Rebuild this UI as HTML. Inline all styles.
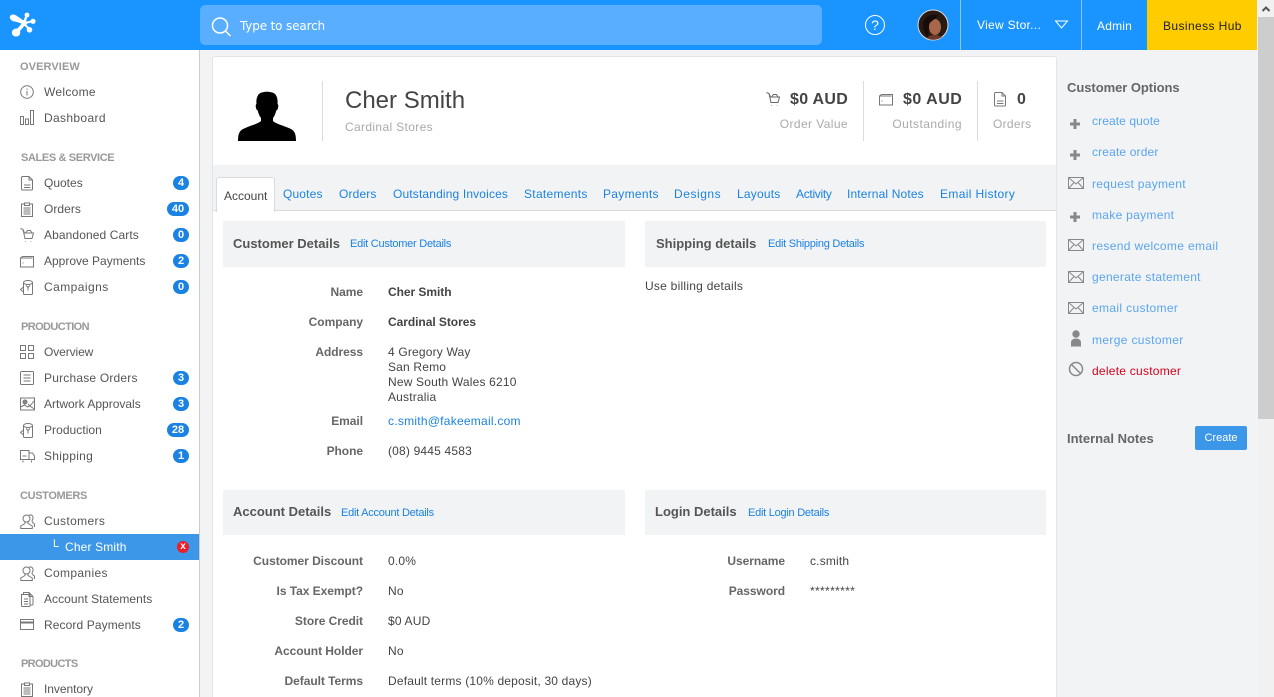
<!DOCTYPE html>
<html><head><meta charset="utf-8"><style>
html,body{margin:0;padding:0;width:1274px;height:697px;overflow:hidden;background:#f2f3f5;font-family:"Liberation Sans",Arial,sans-serif;font-size:12px;color:#444}
*{box-sizing:border-box}
#p{position:absolute;left:0;top:0;width:1274px;height:697px;overflow:hidden;background:#f2f3f5}
.a,.t,.n,.h,.b,.l,.v,.bv,.lk,.o,svg.i{position:absolute}
.t,.n,.h,.l,.v,.bv,.lk,.o{white-space:nowrap;line-height:16px;height:16px}
.n{left:44px;color:#555;letter-spacing:.15px}
.h{left:20px;font-size:11px;font-weight:bold;color:#999}
.b{height:14px;border-radius:7px;background:#1a82e2;color:#fff;font-size:11px;font-weight:bold;line-height:14px;text-align:center;right:1085px}
.b1{width:16px}.b2{width:22px}
.l{left:223px;width:140px;text-align:right;font-weight:bold;color:#666;letter-spacing:-.05px}
.v{left:388px;color:#444;letter-spacing:.18px}
.bv{left:388px;color:#444;font-weight:bold;letter-spacing:-.05px}
.lk{color:#1a82e2;letter-spacing:.25px}
.o{left:1092px;color:#5aa5f0;letter-spacing:.3px}
svg.i{fill:none;stroke:#777;stroke-width:1}
.sec{position:absolute;background:#f2f3f5}
.st{font-size:13px;font-weight:bold;color:#555}
.tab{color:#1a82e2;top:186px;letter-spacing:.15px}
.lk.sm{font-size:11px;letter-spacing:-.25px}
</style></head><body><div id="p">
<svg width="0" height="0" style="position:absolute"><defs>
<symbol id="doc" viewBox="0 0 14 15"><path d="M1.500 1.500a1 1 0 0 1 1-1H9l3.500 3.500v9a1 1 0 0 1-1 1h-9a1 1 0 0 1-1-1zM9 .5V4h3.500M4 9h6.500M4 11.500h6.500"/></symbol>
<symbol id="clip" viewBox="0 0 14 15"><path d="M4.500 2H1.500v12.500h11V2h-3M4.500 1h5v2.500h-5zM3.500 6h7M3.500 8h7M3.500 10h7M3.500 12h7"/></symbol>
<symbol id="cart" viewBox="0 0 15 15"><path d="M.5.500 3 1.500l1.500 3.500h9L12 10.500H5L3 1.500M5.500 5 7.500 2.500h3L12 5M5.500 13v.5M11 13v.5"/></symbol>
<symbol id="fold" viewBox="0 0 14 13"><path d="M.5 3v9h13V1.500H2.500zM.5 3l12 0M2.500 8h1"/></symbol>
<symbol id="can" viewBox="0 0 14 15"><ellipse cx="8" cy="2.500" rx="4.500" ry="2"/><path d="M3.500 2.500v11a1 1 0 0 0 1 1h7a1 1 0 0 0 1-1v-11M6 5.500l2 2 2-2M8 7.500v3M3.500 7 .5 9.500l3 2.500"/></symbol>
<symbol id="ppl" viewBox="0 0 15 15"><circle cx="6.500" cy="4.500" r="3.500"/><path d="M5 8v1.500L.8 12v2.500h11.500V12L8 9.500V8M9 1.300c2-1 4.500.2 4 3.200l-1 2.500 .5 1.500 2 1.500v3"/></symbol>
<symbol id="env" viewBox="0 0 16 12"><path d="M.5.500h15v11H.5zM.5.500 8 7l7.500-6.500M.5 11.500 6 5.500M15.500 11.500 10 5.500"/></symbol>
<symbol id="plus" viewBox="0 0 12 12"><path fill="#888" stroke="none" d="M4.500 1h3v3.500H11v3H7.500V11h-3V7.500H1v-3h3.500z"/></symbol>
</defs></svg>

<!-- header -->
<div class="a" style="left:0;top:0;width:1257px;height:50px;background:#1a94ff"></div>
<svg class="a" style="left:8px;top:10px" width="30" height="30" viewBox="0 0 30 30"><g fill="#fff"><path d="M2 6c2-2.500 5-1.500 7 0l8 5.500-1.500 2.500L7 11.500C4 11.500 1 9 2 6z"/><path d="M15 12 18 4h2l-2.500 9zM16 12l8-1.500.5 1.500-8 2.500zM15 14l1.500-1.500 5.500 6-1.500 1.500z"/><path d="M15 12l3 2-6 7c1 3-1 6-4.500 5.500C4 26 3 23 4.500 20.500 6 18.500 8 18.500 9.500 18.500z"/><circle cx="16" cy="13" r="3"/><circle cx="19" cy="5" r="2.400"/><circle cx="25" cy="11.300" r="2.600"/><circle cx="21.500" cy="19.800" r="2.800"/></g></svg>
<div class="a" style="left:200px;top:5px;width:622px;height:40px;background:#5aaeff;border-radius:5px"></div>
<svg class="a" style="left:210px;top:16px" width="22" height="22" viewBox="0 0 22 22" fill="none" stroke="#fff" stroke-width="1.500"><circle cx="10" cy="9.500" r="7.500"/><path d="m15.500 15 5 5"/></svg>
<div class="t" style="left:240px;top:18px;color:#fff;font-family:'DejaVu Sans',sans-serif;font-size:12px;letter-spacing:-.15px">Type to search</div>
<svg class="a" style="left:864px;top:14px" width="22" height="22" viewBox="0 0 22 22" fill="none" stroke="#fff"><circle cx="11" cy="11" r="9.500"/><text x="11" y="16" text-anchor="middle" fill="#fff" stroke="none" font-family="Liberation Sans" font-size="14">?</text></svg>
<svg class="a" style="left:917px;top:9px" width="32" height="32" viewBox="0 0 32 32"><circle cx="16" cy="16" r="15" fill="#2a1a14" stroke="#ddd" stroke-width="1"/><ellipse cx="18" cy="18" rx="6" ry="8" fill="#a8664a"/><path d="M6 14c2-7 8-9 15-8-2 4-7 6-9 9l-1 13c-3-3-6-9-5-14z" fill="#160c0a"/><path d="M10 29c4-4 10-4 15-1-4 3-11 4-15 1z" fill="#6b3a2c"/></svg>
<div class="a" style="left:960px;top:0;width:1px;height:50px;background:#8cc7fb"></div>
<div class="t" style="left:977px;top:17px;color:#fff;letter-spacing:.3px">View Stor...</div>
<svg class="a" style="left:1054px;top:20px" width="15" height="10" viewBox="0 0 15 10" fill="none" stroke="#fff"><path d="M1.500 1h12L7.500 8z"/></svg>
<div class="a" style="left:1081px;top:0;width:1px;height:50px;background:#8cc7fb"></div>
<div class="t" style="left:1097px;top:18px;color:#fff;letter-spacing:.2px">Admin</div>
<div class="a" style="left:1147px;top:0;width:110px;height:50px;background:#ffcc00"></div>
<div class="t" style="left:1163px;top:18px;color:#222;letter-spacing:.4px">Business Hub</div>

<!-- scrollbar -->
<div class="a" style="left:1258px;top:0;width:16px;height:697px;background:#f1f1f1"></div>
<div class="a" style="left:1258px;top:17px;width:16px;height:402px;background:#cdcdcd"></div>
<svg class="a" style="left:1258px;top:0" width="16" height="17" viewBox="0 0 16 17" fill="none" stroke="#555" stroke-width="2"><path d="m4.500 11 3.500-3.500 3.500 3.500"/></svg>

<!-- sidebar -->
<div class="a" style="left:0;top:50px;width:200px;height:647px;background:#fff;border-right:1px solid #ccc"></div>
<div class="h" style="top:59px;letter-spacing:.1px">OVERVIEW</div>
<svg class="i" style="left:20px;top:85px" width="14" height="14" viewBox="0 0 14 14"><circle cx="7" cy="7" r="6.300"/><path d="M7 6v4.500M7 3.500v1.300"/></svg><div class="n" style="top:84px;letter-spacing:.3px">Welcome</div>
<svg class="i" style="left:20px;top:110px" width="14" height="15" viewBox="0 0 14 15"><path d="M.5 6.500h3v8h-3zM5.500 9h3v5.500h-3zM10.500.5h3v14h-3z"/></svg><div class="n" style="top:110px;letter-spacing:.35px">Dashboard</div>
<div class="h" style="top:150px;left:21px;letter-spacing:-.37px">SALES &amp; SERVICE</div>
<svg class="i" style="left:20px;top:176px" width="14" height="15"><use href="#doc"/></svg><div class="n" style="top:175px;letter-spacing:0">Quotes</div><div class="b b1" style="top:176px">4</div>
<svg class="i" style="left:20px;top:202px" width="14" height="15"><use href="#clip"/></svg><div class="n" style="top:201px;letter-spacing:.05px">Orders</div><div class="b b2" style="top:202px">40</div>
<svg class="i" style="left:20px;top:228px" width="15" height="15"><use href="#cart"/></svg><div class="n" style="top:227px;letter-spacing:.1px">Abandoned Carts</div><div class="b b1" style="top:228px">0</div>
<svg class="i" style="left:20px;top:255px" width="14" height="13"><use href="#fold"/></svg><div class="n" style="top:253px;letter-spacing:0">Approve Payments</div><div class="b b1" style="top:254px">2</div>
<svg class="i" style="left:20px;top:280px" width="14" height="15"><use href="#can"/></svg><div class="n" style="top:279px;letter-spacing:.45px">Campaigns</div><div class="b b1" style="top:280px">0</div>
<div class="h" style="top:319px;left:21px;letter-spacing:-.6px">PRODUCTION</div>
<svg class="i" style="left:20px;top:345px" width="14" height="14" viewBox="0 0 14 14"><path d="M.5.500h5v5h-5zM8.500.5h5v5h-5zM.5 8.500h5v5h-5zM8.500 8.500h5v5h-5z"/></svg><div class="n" style="top:344px;letter-spacing:-.1px">Overview</div>
<svg class="i" style="left:20px;top:371px" width="14" height="14" viewBox="0 0 14 14"><path d="M1.500.500h11a1 1 0 0 1 1 1v11a1 1 0 0 1-1 1h-11a1 1 0 0 1-1-1v-11a1 1 0 0 1 1-1zM3.500 4h7M3.500 7h7M3.500 10h7"/></svg><div class="n" style="top:370px;letter-spacing:.2px">Purchase Orders</div><div class="b b1" style="top:371px">3</div>
<svg class="i" style="left:20px;top:397px" width="15" height="14" viewBox="0 0 15 14"><path d="M.5 1h14v12H.5zM.5 10l4-2 3 2 2-1 5 3M8 7l2 2 4-5"/><circle cx="5" cy="5" r="2" fill="#888"/></svg><div class="n" style="top:396px;letter-spacing:0">Artwork Approvals</div><div class="b b1" style="top:397px">3</div>
<svg class="i" style="left:20px;top:423px" width="14" height="15"><use href="#can"/></svg><div class="n" style="top:422px;letter-spacing:.05px">Production</div><div class="b b2" style="top:423px">28</div>
<svg class="i" style="left:20px;top:450px" width="15" height="13" viewBox="0 0 15 13"><path d="M.5.500h8.500v9H.5zM9 3h3.500L14.500 6v3.500H9M2.500 6h4M3 10.500v2M11.500 10.500v2"/></svg><div class="n" style="top:448px;letter-spacing:.3px">Shipping</div><div class="b b1" style="top:449px">1</div>
<div class="h" style="top:488px;letter-spacing:-.35px">CUSTOMERS</div>
<svg class="i" style="left:20px;top:514px" width="15" height="15"><use href="#ppl"/></svg><div class="n" style="top:513px;letter-spacing:.35px">Customers</div>
<div class="a" style="left:0;top:534px;width:199px;height:26px;background:#3d97e8"></div>
<div class="t" style="left:53px;top:536px;color:#fff;font-size:11px">L</div><div class="n" style="left:65px;top:539px;color:#fff">Cher Smith</div>
<div class="a" style="left:177px;top:541px;width:12px;height:12px;border-radius:50%;background:#ee1c25;color:#fff;font-size:10px;font-weight:bold;line-height:11px;text-align:center">x</div>
<svg class="i" style="left:20px;top:566px" width="15" height="15"><use href="#ppl"/></svg><div class="n" style="top:565px;letter-spacing:.35px">Companies</div>
<svg class="i" style="left:20px;top:592px" width="14" height="15" viewBox="0 0 14 15"><path d="M3.500 2.500V.5H9l4 4V12a1 1 0 0 1-1 1H10M9 .5V4.500h4M1.500 2.500h8.500V13.500a1 1 0 0 1-1 1H2.500a1 1 0 0 1-1-1zM4 7h4M4 9.500h4M4 12h4"/></svg><div class="n" style="top:591px;letter-spacing:.05px">Account Statements</div>
<svg class="i" style="left:20px;top:619px" width="14" height="11" viewBox="0 0 14 11"><path d="M.5.500h13v10H.5z"/><path d="M0 3.500h14" stroke-width="2"/></svg><div class="n" style="top:617px;letter-spacing:.1px">Record Payments</div><div class="b b1" style="top:618px">2</div>
<div class="h" style="top:656px;left:21px;letter-spacing:-.65px">PRODUCTS</div>
<svg class="i" style="left:20px;top:682px" width="14" height="15"><use href="#clip"/></svg><div class="n" style="top:681px;letter-spacing:-.05px">Inventory</div>

<!-- card -->
<div class="a" style="left:212px;top:56px;width:845px;height:660px;background:#fff;border:1px solid #e2e4e7;border-radius:3px"></div>
<svg class="a" style="left:238px;top:91px" width="58" height="50" viewBox="0 0 58 50"><path fill="#000" d="M21 3c3-3 13-3 16 0 2 2 3 6 2.500 10 1 .5 1 3 .2 5-.5 1-1 1.500-1.500 1.500-.5 3-2 6-3.200 7.500v3c3 3 12 5 18 8 4 2 5 6 5 12H0c0-6 1-10 5-12 6-3 15-5 18-8v-3c-1.200-1.500-2.700-4.500-3.200-7.500-.5 0-1-.5-1.500-1.500-.8-2-.8-4.500.2-5C18 9 19 5 21 3z"/></svg>
<div class="a" style="left:322px;top:81px;width:1px;height:60px;background:#dcdcdc"></div>
<div class="t" style="left:345px;top:87px;height:28px;line-height:28px;font-size:24px;color:#444">Cher Smith</div>
<div class="t" style="left:345px;top:119px;color:#aaa;letter-spacing:.35px">Cardinal Stores</div>

<svg class="i" style="left:766px;top:92px;stroke:#666" width="15" height="15"><use href="#cart"/></svg>
<div class="t" style="left:790px;top:91px;height:18px;line-height:18px;font-size:16px;font-weight:bold;color:#444;letter-spacing:.3px">$0 AUD</div>
<div class="t" style="right:426px;top:116px;color:#aaa;letter-spacing:.4px">Order Value</div>
<div class="a" style="left:863px;top:81px;width:1px;height:60px;background:#dcdcdc"></div>
<svg class="i" style="left:879px;top:93px" width="14" height="13"><use href="#fold"/></svg>
<div class="t" style="left:903px;top:91px;height:18px;line-height:18px;font-size:16px;font-weight:bold;color:#444;letter-spacing:.5px">$0 AUD</div>
<div class="t" style="right:312px;top:116px;color:#aaa;letter-spacing:.45px">Outstanding</div>
<div class="a" style="left:977px;top:81px;width:1px;height:60px;background:#dcdcdc"></div>
<svg class="i" style="left:993px;top:92px" width="14" height="15"><use href="#doc"/></svg>
<div class="t" style="left:1017px;top:91px;height:18px;line-height:18px;font-size:16px;font-weight:bold;color:#444">0</div>
<div class="t" style="left:993px;top:116px;color:#aaa;letter-spacing:.3px">Orders</div>

<!-- tabs -->
<div class="a" style="left:213px;top:165px;width:843px;height:46px;background:#f2f3f5;border-bottom:1px solid #d9dcde"></div>
<div class="a" style="left:216px;top:177px;width:59px;height:35px;background:#fff;border:1px solid #d9dcde;border-bottom:0;border-radius:3px 3px 0 0"></div>
<div class="t" style="left:224px;top:188px;color:#444">Account</div>
<div class="t tab" style="left:283px">Quotes</div>
<div class="t tab" style="left:339px">Orders</div>
<div class="t tab" style="left:393px">Outstanding Invoices</div>
<div class="t tab" style="left:524px;letter-spacing:.3px">Statements</div>
<div class="t tab" style="left:603px;letter-spacing:.3px">Payments</div>
<div class="t tab" style="left:674px;letter-spacing:.55px">Designs</div>
<div class="t tab" style="left:737px;letter-spacing:.2px">Layouts</div>
<div class="t tab" style="left:796px;letter-spacing:-.3px">Activity</div>
<div class="t tab" style="left:847px">Internal Notes</div>
<div class="t tab" style="left:940px;letter-spacing:.35px">Email History</div>

<!-- sections -->
<div class="sec" style="left:223px;top:221px;width:402px;height:46px"></div>
<div class="sec" style="left:645px;top:221px;width:401px;height:46px"></div>
<div class="sec" style="left:223px;top:490px;width:402px;height:45px"></div>
<div class="sec" style="left:645px;top:490px;width:401px;height:45px"></div>
<div class="t st" style="left:233px;top:236px">Customer Details</div><div class="lk sm" style="left:350px;top:236px">Edit Customer Details</div>
<div class="t st" style="left:656px;top:236px">Shipping details</div><div class="lk sm" style="left:768px;top:236px">Edit Shipping Details</div>
<div class="t st" style="left:233px;top:504px">Account Details</div><div class="lk sm" style="left:341px;top:505px">Edit Account Details</div>
<div class="t st" style="left:655px;top:504px">Login Details</div><div class="lk sm" style="left:748px;top:505px">Edit Login Details</div>

<div class="l" style="top:284px">Name</div><div class="bv" style="top:284px">Cher Smith</div>
<div class="l" style="top:314px">Company</div><div class="bv" style="top:314px">Cardinal Stores</div>
<div class="l" style="top:344px">Address</div>
<div class="v" style="top:344px">4 Gregory Way</div><div class="v" style="top:359px">San Remo</div><div class="v" style="top:374px">New South Wales 6210</div><div class="v" style="top:389px">Australia</div>
<div class="l" style="top:413px">Email</div><div class="lk" style="left:388px;top:413px">c.smith@fakeemail.com</div>
<div class="l" style="top:443px">Phone</div><div class="v" style="top:443px">(08) 9445 4583</div>
<div class="v" style="left:645px;top:278px;letter-spacing:.25px">Use billing details</div>

<div class="l" style="top:553px">Customer Discount</div><div class="v" style="top:553px">0.0%</div>
<div class="l" style="top:583px">Is Tax Exempt?</div><div class="v" style="top:583px">No</div>
<div class="l" style="top:613px">Store Credit</div><div class="v" style="top:613px">$0 AUD</div>
<div class="l" style="top:643px">Account Holder</div><div class="v" style="top:643px">No</div>
<div class="l" style="top:673px">Default Terms</div><div class="v" style="top:673px">Default terms (10% deposit, 30 days)</div>
<div class="l" style="left:645px;top:553px">Username</div><div class="v" style="left:810px;top:553px">c.smith</div>
<div class="l" style="left:645px;top:583px">Password</div><div class="v" style="left:810px;top:583px;letter-spacing:.35px">*********</div>

<!-- right -->
<div class="t" style="left:1067px;top:80px;font-weight:bold;font-size:13px;color:#666;letter-spacing:-.05px">Customer Options</div>
<svg class="i" style="left:1069px;top:118px" width="12" height="12"><use href="#plus"/></svg><div class="o" style="top:113px;letter-spacing:.1px">create quote</div>
<svg class="i" style="left:1069px;top:149px" width="12" height="12"><use href="#plus"/></svg><div class="o" style="top:144px;letter-spacing:.15px">create order</div>
<svg class="i" style="left:1068px;top:177px;stroke:#888" width="16" height="12"><use href="#env"/></svg><div class="o" style="top:176px">request payment</div>
<svg class="i" style="left:1069px;top:211px" width="12" height="12"><use href="#plus"/></svg><div class="o" style="top:207px">make payment</div>
<svg class="i" style="left:1068px;top:239px;stroke:#888" width="16" height="12"><use href="#env"/></svg><div class="o" style="top:238px;letter-spacing:.35px">resend welcome email</div>
<svg class="i" style="left:1068px;top:271px;stroke:#888" width="16" height="12"><use href="#env"/></svg><div class="o" style="top:269px">generate statement</div>
<svg class="i" style="left:1068px;top:302px;stroke:#888" width="16" height="12"><use href="#env"/></svg><div class="o" style="top:300px;letter-spacing:.35px">email customer</div>
<svg class="a" style="left:1070px;top:330px" width="12" height="17" viewBox="0 0 12 17"><circle cx="6" cy="4" r="3.700" fill="#888"/><path d="M1 16.500v-4c0-2.500 2-4 5-4s5 1.500 5 4v4z" fill="#888"/></svg><div class="o" style="top:332px;letter-spacing:.35px">merge customer</div>
<svg class="a" style="left:1068px;top:361px" width="16" height="16" viewBox="0 0 16 16" fill="none" stroke="#888" stroke-width="1.500"><circle cx="8" cy="8" r="6.500"/><path d="m3.500 3.500 9 9"/></svg><div class="o" style="top:363px;color:#d0021b;letter-spacing:.25px">delete customer</div>
<div class="t" style="left:1067px;top:431px;font-weight:bold;font-size:13px;color:#666">Internal Notes</div>
<div class="a" style="left:1195px;top:426px;width:52px;height:24px;background:#3d97e8;border-radius:2px;color:#fff;font-size:11px;line-height:24px;text-align:center">Create</div>
</div></body></html>
